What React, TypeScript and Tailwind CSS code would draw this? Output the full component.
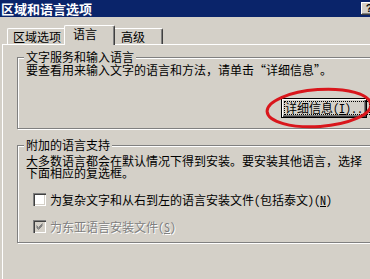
import React from "react";

function CheckBox({ checked, disabled }: { checked?: boolean; disabled?: boolean }) {
  return (
    <div
      className={
        "relative h-[13px] w-[13px] shrink-0 shadow-[inset_1px_1px_0_#808080,inset_2px_2px_0_#404040,inset_-1px_-1px_0_#ffffff,inset_-2px_-2px_0_#d4d0c8] " +
        (disabled ? "bg-[#d4d0c8]" : "bg-white")
      }
    >
      {checked && (
        <svg className="absolute left-0 top-0" width="13" height="13" viewBox="0 0 13 13">
          <path d="M3.5 5.5 L5.5 7.5 L9.5 3.5 M3.5 6.5 L5.5 8.5 L9.5 4.5 M3.5 7.5 L5.5 9.5 L9.5 5.5" stroke={disabled ? "#808080" : "#000"} strokeWidth="1" fill="none" />
        </svg>
      )}
    </div>
  );
}

export default function App() {
  return (
    <div className="relative h-[279px] w-[370px] overflow-hidden bg-[#d4d0c8] font-['Noto_Sans_Mono_CJK_SC','Noto_Sans_CJK_SC',sans-serif] text-[12px] leading-[12px] text-black">
      {/* title bar */}
      <div className="flex h-[17px] w-[379px] items-center bg-[#0a246a] pl-[1px]">
        <span className="font-['Noto_Sans_CJK_SC',sans-serif] text-[13px] font-bold leading-[17px] text-white">区域和语言选项</span>
        <div className="ml-auto mr-[2px] flex h-[13px] w-[16px] items-center justify-center bg-[#d4d0c8] font-['Liberation_Sans',sans-serif] text-[11px] font-bold leading-none text-black shadow-[inset_-1px_-1px_0_#404040,inset_1px_1px_0_#ffffff,inset_-2px_-2px_0_#808080]">
          ?
        </div>
      </div>

      {/* tabs */}
      <div className="relative z-10 mt-[8px] flex items-end pl-[7px]">
        <div className="flex h-[16px] w-[57px] items-center rounded-tl-[2px] border-l border-t border-white pl-[5px] whitespace-nowrap">
          区域选项
        </div>
        <div className="-mb-px flex h-[20px] w-[51px] items-center rounded-t-[2px] border-l border-r border-t border-white border-r-[#404040] bg-[#d4d0c8] pb-[3px] pl-[8px] shadow-[inset_-1px_0_0_#808080] whitespace-nowrap">
          语言
        </div>
        <div className="flex h-[16px] w-[48px] items-center rounded-tr-[2px] border-r border-t border-white border-r-[#404040] pl-[6px] shadow-[inset_-1px_0_0_#808080] whitespace-nowrap">
          高级
        </div>
      </div>

      {/* tab panel */}
      <div className="ml-[2px] h-[260px] w-[400px] border-l border-t border-white">
        {/* group 1 */}
        <div className="relative ml-[14px] mt-[12px] h-[72px] w-[360px] border border-[#808080] pl-[8px] pt-[6px] shadow-[inset_1px_1px_0_#ffffff,1px_1px_0_#ffffff]">
          <span className="absolute left-[6px] top-[-7px] bg-[#d4d0c8] px-[2px] whitespace-nowrap">文字服务和输入语言</span>
          <div className="whitespace-nowrap">要查看用来输入文字的语言和方法，请单击“详细信息”。</div>
          <div className="ml-[255px] mt-[22px] flex h-[20px] w-[86px] border border-black bg-[#d4d0c8] shadow-[inset_1px_1px_0_#ffffff,inset_-1px_-1px_0_#404040,inset_-2px_-2px_0_#808080]">
            <div className="m-[2px] flex flex-1 items-center justify-center border border-dotted border-black whitespace-nowrap">
              详细信息(<span className="underline">I</span>)...
            </div>
          </div>
        </div>

        {/* group 2 */}
        <div className="relative ml-[14px] mt-[16px] h-[98px] w-[360px] border border-[#808080] pl-[8px] pt-[9px] shadow-[inset_1px_1px_0_#ffffff,1px_1px_0_#ffffff]">
          <span className="absolute left-[6px] top-[-7px] bg-[#d4d0c8] px-[2px] whitespace-nowrap">附加的语言支持</span>
          <div className="whitespace-nowrap">
            大多数语言都会在默认情况下得到安装。要安装其他语言，选择
            <br />
            下面相应的复选框。
          </div>
          <div className="ml-[7px] mt-[14px] flex h-[13px] items-center gap-[4px] whitespace-nowrap">
            <CheckBox />
            <span>
              为复杂文字和从右到左的语言安装文件(包括泰文)(<span className="underline">N</span>)
            </span>
          </div>
          <div className="ml-[7px] mt-[14px] flex h-[13px] items-center gap-[4px] whitespace-nowrap">
            <CheckBox checked disabled />
            <span className="text-[#808080] [text-shadow:1px_1px_0_#ffffff]">
              为东亚语言安装文件(<span className="underline">S</span>)
            </span>
          </div>
        </div>
      </div>

      {/* red annotation ellipse */}
      <svg className="pointer-events-none absolute left-[262px] top-[84px]" width="112" height="48" viewBox="0 0 112 48">
        <ellipse cx="57" cy="24" rx="52" ry="18.5" transform="rotate(-4 57 24)" fill="none" stroke="#d9161c" strokeWidth="3" />
      </svg>
    </div>
  );
}
